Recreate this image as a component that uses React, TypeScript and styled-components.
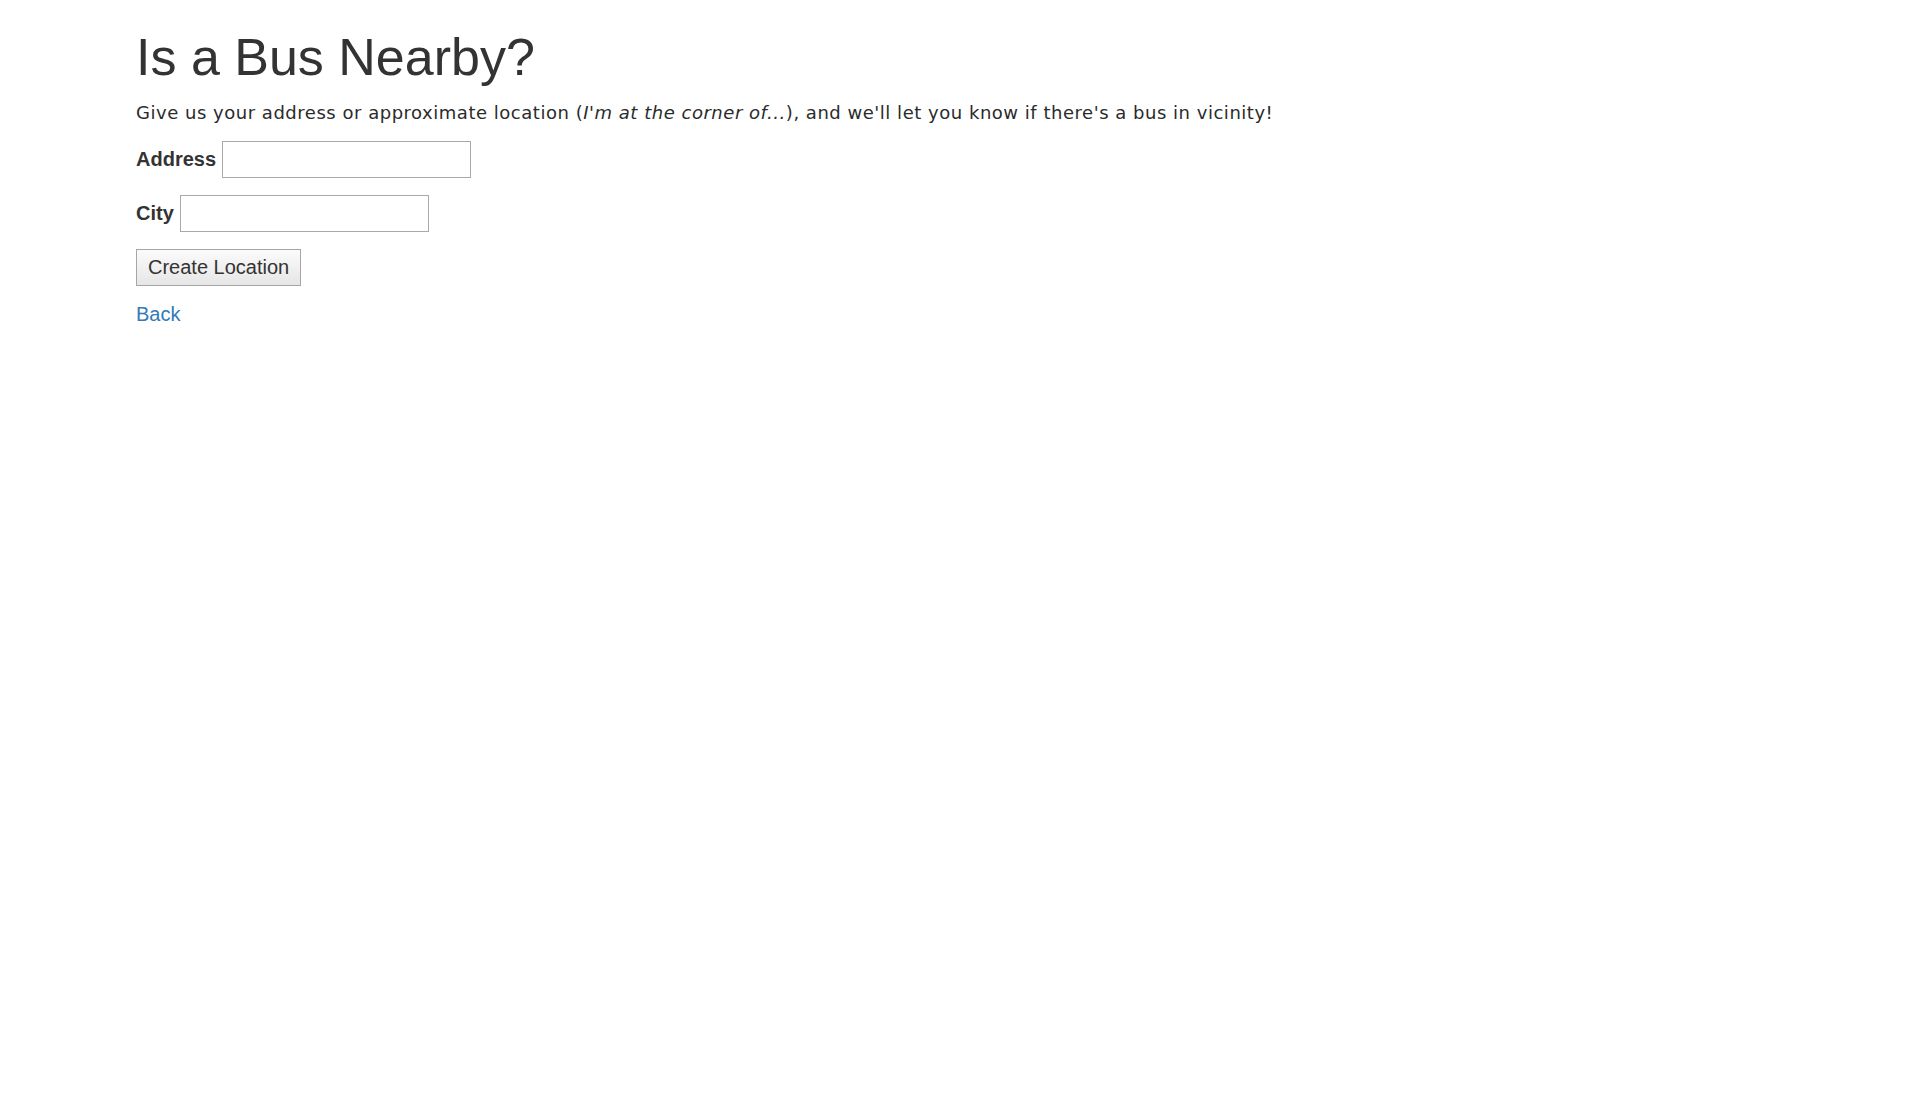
import React from "react";
import styled, { createGlobalStyle } from "styled-components";

const GlobalStyle = createGlobalStyle`
  html, body {
    margin: 0;
    padding: 0;
    background: #fff;
  }
  body {
    font-family: "Liberation Sans", Arial, sans-serif;
    color: #333;
  }
`;

const Page = styled.main`
  padding: 29px 0 0 136px;
`;

const Title = styled.h1`
  margin: 0 0 15px;
  font-family: "Liberation Sans", Arial, sans-serif;
  font-size: 52px;
  font-weight: 400;
  line-height: 1.1;
  color: #333;
`;

const Intro = styled.p`
  margin: 0 0 16px;
  font-family: "DejaVu Sans", Verdana, sans-serif;
  font-size: 18px;
  line-height: 24px;
  letter-spacing: 0.52px;
  color: #2b2b2b;

  em {
    font-style: italic;
  }
`;

const Form = styled.form`
  display: flex;
  flex-direction: column;
  align-items: flex-start;
  gap: 17px;
`;

const Field = styled.div`
  display: flex;
  align-items: center;
  height: 37px;
`;

const Label = styled.label`
  margin-right: 6px;
  font-size: 20px;
  font-weight: 700;
  color: #333;
`;

const TextInput = styled.input`
  box-sizing: border-box;
  width: 249px;
  height: 37px;
  padding: 2px 4px;
  border: 1px solid #a9a9a9;
  background: #fff;
  font-family: "Liberation Sans", Arial, sans-serif;
  font-size: 20px;
  outline: none;
`;

const SubmitButton = styled.button`
  box-sizing: border-box;
  height: 37px;
  padding: 0 11px;
  border: 1px solid #a6a6a6;
  border-radius: 0;
  background: linear-gradient(to bottom, #fbfbfb 0%, #e6e6e6 100%);
  font-family: "Liberation Sans", Arial, sans-serif;
  font-size: 20px;
  color: #333;
  cursor: pointer;
`;

const BackLink = styled.a`
  display: inline-block;
  margin-top: 17px;
  font-size: 20px;
  color: #337ab7;
  text-decoration: none;
`;

const fields = [
  { id: "address", label: "Address" },
  { id: "city", label: "City" },
];

const App = () => {
  return (
    <>
      <GlobalStyle />
      <Page>
        <Title>Is a Bus Nearby?</Title>
        <Intro>
          Give us your address or approximate location (<em>I'm at the corner of...</em>), and we'll let you know if there's a bus in vicinity!
        </Intro>
        <Form onSubmit={(e) => e.preventDefault()}>
          {fields.map((f) => (
            <Field key={f.id}>
              <Label htmlFor={f.id}>{f.label}</Label>
              <TextInput id={f.id} name={f.id} type="text" />
            </Field>
          ))}
          <SubmitButton type="submit">Create Location</SubmitButton>
        </Form>
        <BackLink href="#">Back</BackLink>
      </Page>
    </>
  );
};

export default App;
